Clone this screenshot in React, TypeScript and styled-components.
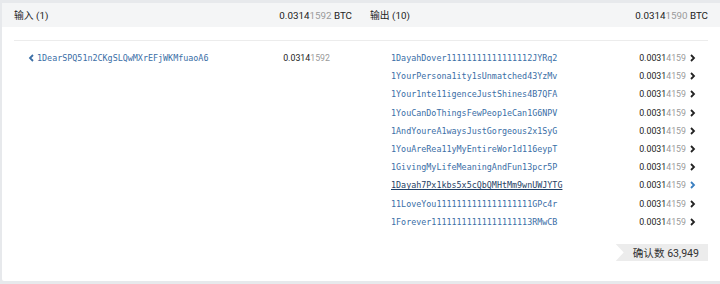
import styled, { createGlobalStyle } from "styled-components";

const GlobalStyle = createGlobalStyle`
  html, body {
    margin: 0;
    padding: 0;
    background: #e7e9ec;
  }
  body {
    font-family: Roboto, "Noto Sans CJK SC", sans-serif;
  }
`;

const inputs = [{ addr: "1DearSPQ51n2CKgSLQwMXrEFjWKMfuaoA6", value: "0.03141592" }];

const outputs = [
  "1DayahDover11111111111111112JYRq2",
  "1YourPersona1ity1sUnmatched43YzMv",
  "1Your1nte11igenceJustShines4B7QFA",
  "1YouCanDoThingsFewPeop1eCan1G6NPV",
  "1AndYoureA1waysJustGorgeous2x1SyG",
  "1YouAreRea11yMyEntireWor1d116eypT",
  "1GivingMyLifeMeaningAndFun13pcr5P",
  "1Dayah7Px1kbs5x5cQbQMHtMm9wnUWJYTG",
  "11LoveYou1111111111111111111GPc4r",
  "1Forever11111111111111111113RMwCB",
];

// 금액: 소수 넷째 자리까지 진하게, 나머지는 회색
const Amount = ({ value }: { value: string }) => (
  <>
    {value.slice(0, 6)}
    <Dim>{value.slice(6)}</Dim>
  </>
);

const Chevron = ({ dir, color }: { dir: "left" | "right"; color: string }) => (
  <svg width="7" height="8" viewBox="0 0 7 8">
    <polyline
      points={dir === "left" ? "5,1 2,4 5,7" : "2,1 5,4 2,7"}
      fill="none"
      stroke={color}
      strokeWidth="1.8"
    />
  </svg>
);

export default function App() {
  return (
    <>
      <GlobalStyle />
      <Panel>
        <Header>
          <HeadCell>
            <span>输入 (1)</span>
            <span>
              <Amount value="0.03141592" /> BTC
            </span>
          </HeadCell>
          <HeadCell>
            <span>输出 (10)</span>
            <span>
              <Amount value="0.03141590" /> BTC
            </span>
          </HeadCell>
        </Header>
        <Body>
          <Column>
            {inputs.map((r) => (
              <Row key={r.addr} $indent={14}>
                <ChevronSlot $side="left">
                  <Chevron dir="left" color="#3b6fa6" />
                </ChevronSlot>
                <Address>{r.addr}</Address>
                <Value>
                  <Amount value={r.value} />
                </Value>
                <ChevronSlot $side="right" />
              </Row>
            ))}
          </Column>
          <Column>
            {outputs.map((a, i) => (
              <Row key={a} $indent={21}>
                <Address $active={i === 7}>{a}</Address>
                <Value>
                  <Amount value="0.00314159" />
                </Value>
                <ChevronSlot $side="right">
                  <Chevron dir="right" color={i === 7 ? "#3b7fc0" : "#222"} />
                </ChevronSlot>
              </Row>
            ))}
          </Column>
        </Body>
        <Footer>
          <Badge>确认数 63,949</Badge>
        </Footer>
      </Panel>
    </>
  );
}

const Panel = styled.div`
  margin: 3px 0 0 2px;
  height: 278px;
  background: #ffffff;
  border-bottom-left-radius: 2px;
`;

const Header = styled.div`
  display: grid;
  grid-template-columns: 1fr 1fr;
  gap: 18px;
  height: 24px;
  padding: 0 12px;
  background: #f4f5f6;
`;

const HeadCell = styled.div`
  display: flex;
  align-items: center;
  justify-content: space-between;
  font-size: 9.8px;
  color: #222;
`;

const Dim = styled.span`
  color: #9a9a9a;
`;

const Body = styled.div`
  display: grid;
  grid-template-columns: 1fr 1fr;
  gap: 18px;
  margin: 13px 12px 0;
  padding-top: 8px;
  border-top: 1px solid #ececec;
`;

const Column = styled.div`
  display: flex;
  flex-direction: column;
`;

const Row = styled.div<{ $indent: number }>`
  display: flex;
  align-items: center;
  height: 18.2px;
  padding-left: ${(p) => p.$indent}px;
`;

const ChevronSlot = styled.span<{ $side: "left" | "right" }>`
  display: flex;
  align-items: center;
  width: ${(p) => (p.$side === "left" ? "9px" : "22px")};
  padding-left: ${(p) => (p.$side === "right" ? "3px" : "0")};
  box-sizing: border-box;
`;

const Address = styled.span<{ $active?: boolean }>`
  flex: 1;
  font-family: "DejaVu Sans Mono", "Liberation Mono", monospace;
  font-size: 8.4px;
  color: ${(p) => (p.$active ? "#1f3f66" : "#3a6ea6")};
  text-decoration: ${(p) => (p.$active ? "underline" : "none")};
  white-space: nowrap;
`;

const Value = styled.span`
  font-size: 8.8px;
  color: #222;
`;

const Footer = styled.div`
  display: flex;
  justify-content: flex-end;
  padding: 13px 12px 0;
`;

const Badge = styled.div`
  display: flex;
  align-items: center;
  height: 17px;
  padding: 0 9px 0 17px;
  background: #ececec;
  color: #333;
  font-size: 10.6px;
  clip-path: polygon(0 0, 100% 0, 100% 100%, 0 100%, 8px 50%);
`;
